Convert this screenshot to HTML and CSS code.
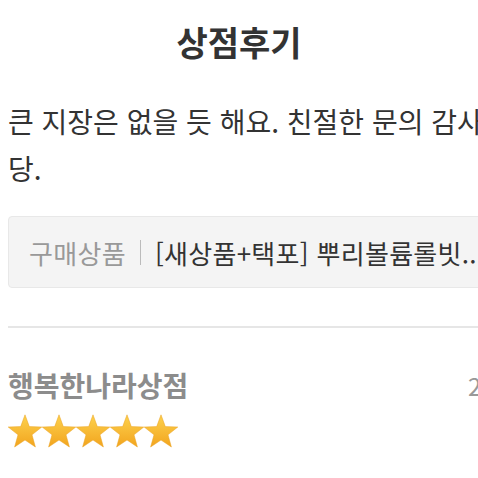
FILE: index.html
```html
<!DOCTYPE html>
<html lang="ko">
<head>
  <meta charset="UTF-8">
  <meta name="viewport" content="width=device-width, initial-scale=1">
  <title>상점후기</title>
  <link rel="stylesheet" href="styles.css">
</head>
<body>
  <h1 class="title">상점후기</h1>

  <div class="review">
    <p class="review-text">큰 지장은 없을 듯 해요. 친절한 문의 감사합니당.</p>

    <div class="product">
      <span class="product-label">구매상품</span>
      <span class="product-sep"></span>
      <span class="product-name">[새상품+택포] 뿌리볼륨롤빗..</span>
    </div>

    <div class="divider"></div>

    <div class="seller-row">
      <span class="seller-name">행복한나라상점</span>
      <span class="seller-date">2021.11.23</span>
    </div>

    <div class="stars">
      <svg width="172" height="34" viewBox="0 0 172 34">
        <defs>
          <linearGradient id="starFill" x1="0" y1="0" x2="0" y2="1">
            <stop offset="0" stop-color="#fdd24e"/>
            <stop offset="1" stop-color="#f2a41e"/>
          </linearGradient>
          <path id="star" d="M17 0.8 L21.3 12.6 L33.8 13 L24 20.8 L27.4 33 L17 26 L6.6 33 L10 20.8 L0.2 13 L12.7 12.6 Z"/>
        </defs>
        <use href="#star" x="0" fill="url(#starFill)" stroke="#eaa322" stroke-width="0.5"/>
        <use href="#star" x="34" fill="url(#starFill)" stroke="#eaa322" stroke-width="0.5"/>
        <use href="#star" x="68" fill="url(#starFill)" stroke="#eaa322" stroke-width="0.5"/>
        <use href="#star" x="102" fill="url(#starFill)" stroke="#eaa322" stroke-width="0.5"/>
        <use href="#star" x="136" fill="url(#starFill)" stroke="#eaa322" stroke-width="0.5"/>
      </svg>
    </div>
  </div>
</body>
</html>
```

FILE: styles.css
```css
html, body {
  margin: 0;
  padding: 0;
  background: #fff;
  overflow: hidden;
}
body {
  width: 478px;
  font-family: "Noto Sans CJK KR", "Noto Sans", sans-serif;
  color: #333;
}
.title {
  margin: 0;
  padding-top: 18px;
  height: 62px;
  font-size: 34px;
  font-weight: 700;
  line-height: 48px;
  text-align: center;
  color: #333;
}
.review {
  width: 580px;
  padding-left: 8px;
}
.review-text {
  width: 540px;
  margin: 18px 0 0;
  font-size: 28px;
  line-height: 47px;
  color: #333;
}
.product {
  display: flex;
  align-items: center;
  height: 70px;
  margin-top: 24px;
  padding: 0 20px;
  background: #f4f4f4;
  border: 1px solid #e8e8e8;
  border-radius: 4px;
  font-size: 26px;
  white-space: nowrap;
  overflow: hidden;
}
.product-label {
  color: #999;
  letter-spacing: 0.3px;
}
.product-sep {
  width: 1px;
  height: 25px;
  margin: 0 14px;
  background: #bbb;
}
.product-name {
  color: #333;
  letter-spacing: 0.3px;
}
.divider {
  height: 2px;
  margin-top: 38px;
  background: #e6e6e6;
}
.seller-row {
  display: flex;
  justify-content: space-between;
  align-items: center;
  margin-top: 40px;
  height: 34px;
}
.seller-name {
  font-size: 28px;
  font-weight: 700;
  color: #8c8c8c;
}
.seller-date {
  font-size: 24px;
  color: #999;
}
.stars {
  margin-top: 12px;
  height: 34px;
}
.stars svg {
  display: block;
}
```
